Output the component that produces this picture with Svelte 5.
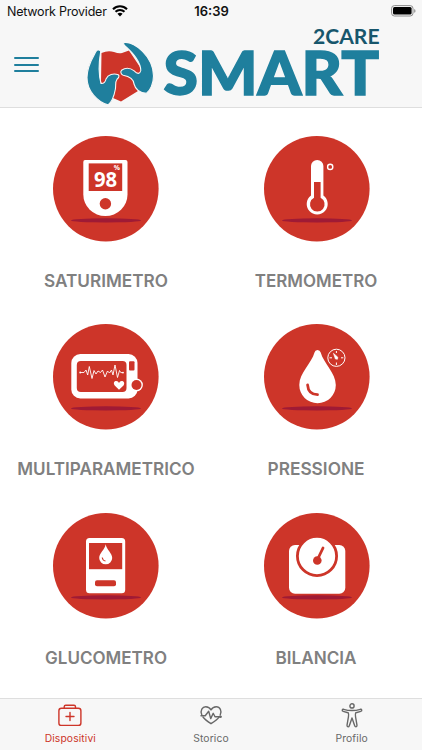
<script>
  const devices = [
    { id: 'sat', label: 'SATURIMETRO', width: 124 },
    { id: 'term', label: 'TERMOMETRO', width: 122.5 },
    { id: 'multi', label: 'MULTIPARAMETRICO', width: 177.5 },
    { id: 'press', label: 'PRESSIONE', width: 97 },
    { id: 'gluc', label: 'GLUCOMETRO', width: 122 },
    { id: 'bil', label: 'BILANCIA', width: 81 }
  ];
  const tabs = [
    { id: 'dev', label: 'Dispositivi', active: true },
    { id: 'hist', label: 'Storico', active: false },
    { id: 'prof', label: 'Profilo', active: false }
  ];
</script>

<div class="app">
  <div class="status">
    <div class="carrier">
      <span>Network Provider</span>
      <svg width="16" height="12" viewBox="0 0 16 12" fill="none" stroke="#000" stroke-width="2.1">
        <path d="M1 4.2C5 .3 11 .3 15 4.2M3.5 6.8C6 4.4 10 4.4 12.5 6.8" />
        <path d="M5.4 8.7C7 7.3 9 7.3 10.6 8.7L8 11.4Z" fill="#000" stroke="none" />
      </svg>
    </div>
    <b class="clock">16:39</b>
    <svg class="battery" width="25" height="12" viewBox="0 0 25 12">
      <rect x=".6" y=".6" width="21.4" height="10.4" rx="2.8" fill="none" stroke="#8c8c8c" />
      <rect x="2" y="2" width="18.6" height="7.6" rx="1.5" />
      <path d="M23.2 4v3.8q1.3-.6 1.3-1.9t-1.3-1.9Z" fill="#8c8c8c" />
    </svg>
  </div>

  <header>
    <button aria-label="Menu"><i></i><i></i><i></i></button>
    <svg class="logo" width="300" height="84" viewBox="84 24 300 84">
      <path d="M101.5 53Q108 50 114 52Q119 54 122 53L129 50.5L142 70L138 91L121 101.5L113 98L101 82Z" fill="#cd3529" />
      <path d="M98 50C100 49.5 101.2 51 100.5 53C98.5 64 98.8 75 101 83.500C104 83.700 105.500 81.500 106 79C108 74.500 113.500 73 118.300 74.800C119.800 76 118.500 78 117 79.200C115 82 116 85 115.400 89C114.500 94 113 101 108 104.900C97.500 102 87 91 87 77.500C87 66 93 57 96 51.500Q96.700 50 98 50Z" fill="#1f7f9d" stroke="#f7f7f7" stroke-width="1.1" />
      <path d="M124 42.500C134 41.300 153.500 56 153.500 76C153.500 84 150 90.500 146.500 93.300C140 93 135.500 89.500 134 84C133.500 78 128 76 123.200 75.200C120.800 74.500 120.200 71.500 121.500 70.300C126 67.200 131 68.500 134.200 70.900C137.500 74.500 140 74 140.800 70.500C140.500 61 132 52 124.500 45.500Q123 43.600 124 42.500Z" fill="#1f7f9d" stroke="#f7f7f7" stroke-width="1.1" />
      <text class="smart" x="163.500" y="94.500" textLength="215.500" lengthAdjust="spacingAndGlyphs">SMART</text>
      <text class="care" x="313" y="44" textLength="66.500" lengthAdjust="spacingAndGlyphs">2CARE</text>
    </svg>
  </header>

  <main>
    {#each devices as d}
      <div class="device">
        <svg width="122" height="122" viewBox="0 0 122 122">
          <circle cx="60.8" cy="60.8" r="52.8" fill="#cd3529" />
          <ellipse cx="61" cy="92.4" rx="35" ry="2.1" fill="#9f1a35" />
          {#if d.id === 'sat'}
            <path d="M40 32H80.500Q82.500 32 82.500 34V66.500A22 21.500 0 0 1 38.300 66.500V34Q38.300 32 40 32Z" fill="#fff" />
            <rect x="43.700" y="35.400" width="33.500" height="27.600" fill="#cd3529" />
            <circle cx="60.400" cy="75.800" r="5.700" fill="#cd3529" />
            <text class="num" x="49" y="59.200" textLength="23.200" lengthAdjust="spacingAndGlyphs">98</text>
            <text class="pct" x="68.800" y="41.900" textLength="6.200" lengthAdjust="spacingAndGlyphs">%</text>
          {:else if d.id === 'term'}
            <path d="M55 38a6.200 6 0 0 1 12.400 0V67.500A10.500 10.500 0 1 1 55 67.500Z" fill="#fff" />
            <path d="M58 54H64.600V69.800A7.300 7.300 0 1 1 58 69.800Z" fill="#cd3529" />
            <circle cx="74.200" cy="38.900" r="2.600" fill="none" stroke="#fff" stroke-width="1.400" />
          {:else if d.id === 'multi'}
            <rect x="26.300" y="38" width="66.200" height="44.500" rx="9" fill="#fff" />
            <circle cx="91.500" cy="69" r="6.400" fill="#fff" />
            <rect x="31.800" y="44.900" width="49.700" height="31.200" rx="4" fill="#cd3529" />
            <rect x="84" y="45.300" width="5.500" height="9.200" rx="1" fill="#cd3529" />
            <circle cx="91.500" cy="69" r="5" fill="#cd3529" />
            <path d="M35 56.500H39L41 54L42.700 59L44.300 50.500L47 62.500L49 54.500L51 58L53 55L55.500 56.500L57.500 54L60 61L62.500 55L64.500 57L66.500 54L68 59L70 49L72.500 61.500L74.500 54.500L75.800 56.600H78" fill="none" stroke="#fff" stroke-width=".9" stroke-linejoin="round" />
            <circle cx="35.200" cy="56.500" r=".9" fill="#fff" /><circle cx="78" cy="56.600" r=".9" fill="#fff" />
            <path d="M74 73.700L69.700 69.500C68 67 69.200 65 71.300 65Q73.300 65 74 67Q74.800 65 76.700 65C79 65 80 67.200 78.500 69.500Z" fill="#fff" />
          {:else if d.id === 'press'}
            <path d="M58.500 36.500Q59 34 61.500 34T64.700 36.500C67.500 47 79.800 57 79.800 69A18.200 18.200 0 0 1 43.300 69C43.300 57 55.700 47 58.500 36.500Z" fill="#fff" />
            <path d="M51.600 69C52 75 55.500 78.600 61.500 78.700" fill="none" stroke="#cd3529" stroke-width="2.800" stroke-linecap="round" />
            <circle cx="80.400" cy="41.800" r="8.600" fill="none" stroke="#fff" stroke-width="1" />
            <path d="M80.400 35V37M80.400 46.500V49M73.500 41.800H76M85 41.800H87.300" stroke="#fff" stroke-width="1" />
            <path d="M77.400 37.300L81.800 41.200L81.500 43.200L79.400 43Z" fill="#fff" stroke="#fff" stroke-width=".6" />
          {:else if d.id === 'gluc'}
            <rect x="41" y="33" width="39.200" height="55.300" rx="3.500" fill="#fff" />
            <rect x="44" y="38" width="33.200" height="26.200" fill="#cd3529" />
            <rect x="50" y="75.200" width="21" height="6" rx="2" fill="#cd3529" />
            <path d="M60.700 39.300C61.500 45 67.200 48 67.200 53A6.500 6.300 0 0 1 54.200 53C54.200 48 59.900 45 60.700 39.300Z" fill="#fff" />
            <path d="M57.200 52.500Q57.700 55.600 60.500 56" fill="none" stroke="#cd3529" stroke-width="1.100" />
          {:else}
            <rect x="33" y="40" width="56.300" height="48.700" rx="6" fill="#fff" />
            <circle cx="61" cy="51" r="19.600" fill="#fff" stroke="#cd3529" stroke-width="2.800" />
            <circle cx="61.300" cy="55.500" r="4.300" fill="#cd3529" />
            <path d="M62.200 53L67 43" stroke="#cd3529" stroke-width="2.800" stroke-linecap="round" />
          {/if}
        </svg>
        <svg class="name" width="200" height="30">
          <text x="100" y="21.500" text-anchor="middle" textLength={d.width} lengthAdjust="spacingAndGlyphs">{d.label}</text>
        </svg>
      </div>
    {/each}
  </main>

  <nav>
    {#each tabs as t}
      <div class="tab" class:active={t.active}>
        <svg width="26" height="26" viewBox="0 0 26 26" fill="none" stroke="currentColor" stroke-width="1.400" stroke-linecap="round" stroke-linejoin="round">
          {#if t.id === 'dev'}
            <rect x="1.900" y="5.200" width="22" height="17.200" rx="2.500" />
            <path d="M7.200 5V3.700Q7.200 2.300 8.700 2.300H17Q18.500 2.300 18.500 3.700V5M13 9.500V17.500M9 13.500H17" />
          {:else if t.id === 'hist'}
            <path d="M3.800 12C1.800 7.500 4.500 3.800 7.700 3.800C10.500 3.800 12 5.200 13 7C14 5.200 15.500 3.800 18.300 3.800C22 3.800 24.200 8 22.200 12M5 14C7 16.800 10 18.800 13 20.700C16 18.800 19.500 16.500 21.200 13.800" />
            <path d="M3 12.800H7.200L10.700 8.300L12.700 15.600L15.200 10.300L17 13.800H23" />
            <circle cx="22.500" cy="13.800" r=".5" />
          {:else}
            <circle cx="13" cy="2.900" r="2.100" />
            <path d="M4.700 6.300Q13 8.800 21.300 6.300C23 6 23.300 8 21.800 8.400L17 9.700C15.700 10.500 16.500 14 17.200 17.500L18 22.300C18 24.300 16.200 24.200 15.700 22.800L13 15L10.300 22.800C9.800 24.200 8 24.300 8 22.300L8.800 17.500C9.500 14 10.300 10.500 9 9.700L4.200 8.400C2.700 8 3 6 4.700 6.300Z" />
          {/if}
        </svg>
        <span>{t.label}</span>
      </div>
    {/each}
  </nav>
</div>

<style>
  .app { width: 422px; height: 750px; display: flex; flex-direction: column; overflow: hidden; background: #fff; font-family: Inter, sans-serif; }
  svg { display: block; flex: none; }
  .status { height: 24px; box-sizing: border-box; background: #f7f7f7; display: grid; grid-template-columns: 1fr 60px 1fr; align-items: start; padding: 4px 6px 0 7px; font-size: 13px; line-height: 15px; color: #111; }
  .carrier { display: flex; gap: 5px; }
  .carrier span { font-size: 12.500px; letter-spacing: -.22px; white-space: nowrap; }
  .carrier svg { margin-top: 1px; }
  .clock { text-align: center; font-weight: 600; letter-spacing: 0; }
  .battery { justify-self: end; margin-top: 1px; }
  header { height: 84px; box-sizing: border-box; background: #f7f7f7; border-bottom: 1px solid #dedede; display: flex; }
  button { all: unset; display: flex; flex-direction: column; gap: 4.500px; width: 25px; margin: 33px 45px 0 14px; }
  button i { height: 2px; background: #1f7f9d; border-radius: 1px; }
  .logo text { font-family: Lato, sans-serif; font-weight: 900; }
  .smart { font-size: 60.500px; fill: #1f7f9d; stroke: #1f7f9d; stroke-width: 1.500px; }
  .logo .care { font-size: 21px; font-weight: 700; fill: #17566c; }
  main { flex: 1; display: grid; grid-template-columns: 210.500px 211.500px; grid-template-rows: repeat(3, 188.300px); padding-top: 20px; box-sizing: border-box; min-height: 0; }
  .device { display: flex; flex-direction: column; padding-left: 5px; }
  .device > svg:first-child { margin-left: 40px; }
  .name { margin-top: 15px; margin-left: .500px; }
  .name text { font-size: 17.500px; font-weight: 600; fill: #808080; }
  .num { font: 700 20.500px "Open Sans", sans-serif; fill: #fff; }
  .pct { font: 700 6.500px "Open Sans", sans-serif; fill: #fff; }
  nav { height: 52px; box-sizing: border-box; border-top: 1px solid #dedede; background: #f7f7f7; display: grid; grid-template-columns: repeat(3, 1fr); }
  .tab { display: flex; flex-direction: column; align-items: center; padding-top: 4px; color: #686868; }
  .tab span { margin-top: 2px; font-size: 10.300px; line-height: 15px; letter-spacing: .12px; }
  .active { color: #cd3529; }
</style>
